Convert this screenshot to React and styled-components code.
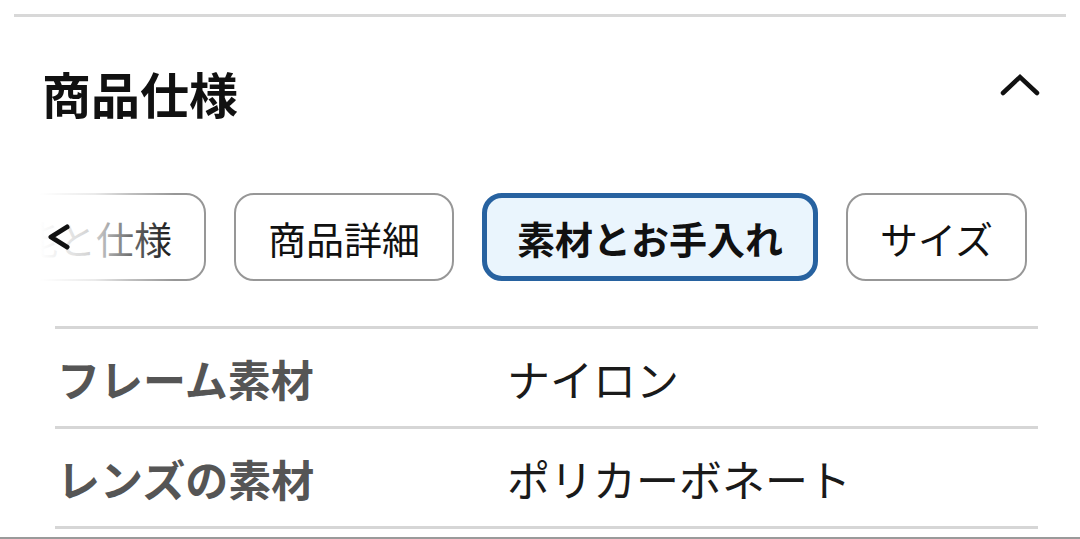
import React, { useEffect, useRef } from 'react';
import styled, { createGlobalStyle } from 'styled-components';

const GlobalStyle = createGlobalStyle`
  html, body {
    margin: 0;
    padding: 0;
    background: #ffffff;
    font-family: "Noto Sans CJK JP", "Noto Sans", sans-serif;
  }
`;

const Page = styled.div`
  width: 1080px;
  height: 539px;
  overflow: hidden;
  display: flex;
  flex-direction: column;
  box-sizing: border-box;
  padding-top: 14px;
  border-bottom: 2px solid #9a9a9a;
`;

const TopRule = styled.div`
  height: 3px;
  margin: 0 14px;
  background: #d8d8d8;
`;

const Header = styled.div`
  display: flex;
  align-items: center;
  justify-content: space-between;
  height: 150px;
  padding: 0 40px 0 42px;
`;

const Title = styled.h2`
  margin: 0;
  font-size: 49px;
  font-weight: 700;
  color: #111;
`;

const Toggle = styled.button`
  border: none;
  background: none;
  padding: 0;
  margin-top: -14px;
  display: flex;
  cursor: pointer;
`;

const TabsWrap = styled.div`
  position: relative;
  margin-top: 26px;
`;

const Track = styled.div`
  display: flex;
  gap: 28px;
  overflow-x: auto;
  padding: 0 56px;
  scrollbar-width: none;
  &::-webkit-scrollbar { display: none; }
`;

const Chip = styled.button`
  flex: 0 0 auto;
  height: 88px;
  box-sizing: border-box;
  padding: 0 ${p => (p.$active ? 30 : 32)}px;
  border-radius: 20px;
  border: ${p => (p.$active ? '5px solid #2762a0' : '2px solid #979797')};
  background: ${p => (p.$active ? '#eaf5fd' : '#ffffff')};
  color: #111;
  font-family: inherit;
  font-size: 38px;
  font-weight: ${p => (p.$active ? 700 : 400)};
  white-space: nowrap;
  cursor: pointer;
`;

const Fade = styled.div`
  position: absolute;
  left: 0;
  top: -4px;
  bottom: -4px;
  width: 200px;
  display: flex;
  align-items: center;
  padding-left: 45px;
  box-sizing: border-box;
  background: linear-gradient(
    to right,
    #ffffff 0px,
    #ffffff 40px,
    rgba(255, 255, 255, 0.8) 95px,
    rgba(255, 255, 255, 0.4) 130px,
    rgba(255, 255, 255, 0) 175px
  );
  pointer-events: none;
`;

const SpecTable = styled.div`
  margin: 45px 42px 0 55px;
  border-top: 3px solid #d6d6d6;
`;

const SpecRow = styled.div`
  display: grid;
  grid-template-columns: 450px 1fr;
  align-items: center;
  height: 100px;
  box-sizing: border-box;
  border-bottom: 3px solid #d6d6d6;
  padding-left: 2px;
`;

const Label = styled.div`
  font-size: 43px;
  font-weight: 700;
  color: #555;
`;

const Value = styled.div`
  font-size: 43px;
  font-weight: 400;
  color: #1a1a1a;
`;

const tabs = ['機能と仕様', '商品詳細', '素材とお手入れ', 'サイズ'];
const specs = [
  ['フレーム素材', 'ナイロン'],
  ['レンズの素材', 'ポリカーボネート'],
];

export default function App() {
  const trackRef = useRef(null);
  const anchorRef = useRef(null);

  useEffect(() => {
    const place = () => {
      const track = trackRef.current;
      const chip = anchorRef.current;
      if (!track || !chip) return;
      // scroll so the "商品詳細" chip starts at x = 234
      track.scrollLeft = 0;
      track.scrollLeft = chip.getBoundingClientRect().left - 234;
    };
    place();
    if (document.fonts && document.fonts.ready) document.fonts.ready.then(place);
  }, []);

  return (
    <>
      <GlobalStyle />
      <Page>
        <TopRule />
        <Header>
          <Title>商品仕様</Title>
          <Toggle aria-label="閉じる">
            <svg width="40" height="24" viewBox="0 0 40 24" fill="none">
              <path d="M3 20 L20 4 L37 20" stroke="#111" strokeWidth="4.5" strokeLinecap="round" />
            </svg>
          </Toggle>
        </Header>
        <TabsWrap>
          <Track ref={trackRef}>
            {tabs.map((t, i) => (
              <Chip key={t} ref={i === 1 ? anchorRef : undefined} $active={i === 2}>
                {t}
              </Chip>
            ))}
          </Track>
          <Fade>
            <svg width="28" height="28" viewBox="0 0 28 28" fill="none">
              <path d="M22 4 L6 14 L22 24" stroke="#111" strokeWidth="5" strokeLinecap="round" strokeLinejoin="round" />
            </svg>
          </Fade>
        </TabsWrap>
        <SpecTable>
          {specs.map(([k, v]) => (
            <SpecRow key={k}>
              <Label>{k}</Label>
              <Value>{v}</Value>
            </SpecRow>
          ))}
        </SpecTable>
      </Page>
    </>
  );
}
